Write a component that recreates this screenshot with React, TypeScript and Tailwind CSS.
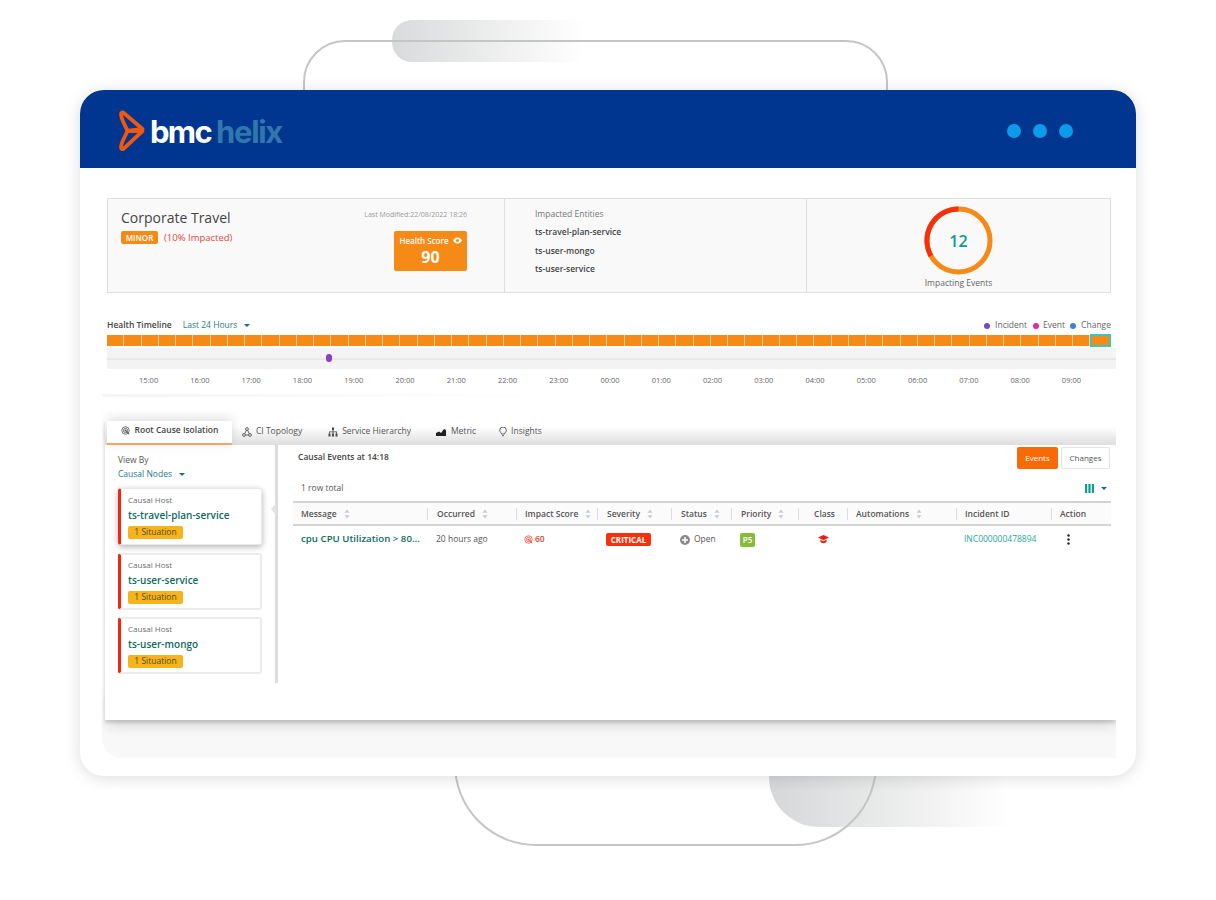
const hours = ["15:00","16:00","17:00","18:00","19:00","20:00","21:00","22:00","23:00","00:00","01:00","02:00","03:00","04:00","05:00","06:00","07:00","08:00","09:00"];
const segments = Array.from({ length: 57 }, (_, i) => i);

const columns = [
  { label: "Message", sort: true, w: "w-[134px]", pl: "pl-2" },
  { label: "Occurred", sort: true, w: "w-[89px]", pl: "pl-[9px]" },
  { label: "Impact Score", sort: true, w: "w-[81px]", pl: "pl-2" },
  { label: "Severity", sort: true, w: "w-[74px]", pl: "pl-[9px]" },
  { label: "Status", sort: true, w: "w-[60px]", pl: "pl-[9px]" },
  { label: "Priority", sort: true, w: "w-[67px]", pl: "pl-[9px]" },
  { label: "Class", sort: false, w: "w-[49px]", pl: "pl-[15px]" },
  { label: "Automations", sort: true, w: "w-[109px]", pl: "pl-2" },
  { label: "Incident ID", sort: false, w: "w-[95px]", pl: "pl-2" },
  { label: "Action", sort: false, w: "w-[60px]", pl: "pl-2" },
];

const hosts = [
  { name: "ts-travel-plan-service", active: true },
  { name: "ts-user-service", active: false },
  { name: "ts-user-mongo", active: false },
];

function Caret() {
  return <span className="ml-[7px] inline-block h-0 w-0 border-x-[3px] border-t-[3px] border-x-transparent border-t-[#0f6f7c] align-middle" />;
}

function SortIcon() {
  return (
    <svg width="6" height="10" viewBox="0 0 6 10" className="ml-[7px] shrink-0">
      <path d="M3 0.5 L5.5 3.8 H0.5 Z M3 9.5 L5.5 6.2 H0.5 Z" fill="#c9cdd0" />
    </svg>
  );
}

function TargetIcon({ color, size }: { color: string; size: number }) {
  return (
    <svg width={size} height={size} viewBox="0 0 12 12" fill="none" stroke={color} strokeWidth="1.1">
      <circle cx="6" cy="6" r="5" />
      <circle cx="6" cy="6" r="2.8" />
      <circle cx="6" cy="6" r="0.8" fill={color} />
      <path d="M6 6 L11 11" strokeWidth="1.4" />
    </svg>
  );
}

function Logo() {
  return (
    <div className="flex items-center">
      <svg width="28" height="42" viewBox="0 0 28 42" fill="none" stroke="#f2570f" strokeWidth="3.8" strokeLinejoin="round" strokeLinecap="round">
        <path d="M3 4 C3 2.5 4.5 2 5.5 2.8 L24.5 19 L9.5 21 C7 15 3 9 3 4 Z" />
        <path d="M9.5 21 L24.5 21 L5.5 38.8 C4.5 39.6 3 39 3 37.5 C3 32 7 27 9.5 21 Z" />
      </svg>
      <span className="ml-[4px] font-['Inter',sans-serif] text-[31px] leading-none font-bold tracking-[-1.7px] text-white">bmc</span>
      <span className="ml-[5px] font-['Inter',sans-serif] text-[31px] leading-none font-bold tracking-[-1.3px] text-[#3177ab]">helix</span>
    </div>
  );
}

function HostCard({ name, active }: { name: string; active: boolean }) {
  return (
    <div className={`relative h-[57px] w-[144px] rounded-[3px] border-l-[3px] border-l-[#f5230f] bg-white pl-[7px] ${active ? "border-y border-r border-y-[#e8e8e8] border-r-[#e8e8e8] pt-[4px] shadow-[0_2px_6px_rgba(0,0,0,0.3)]" : "border-y-2 border-r-2 border-y-[#ececec] border-r-[#ececec] pt-[3px]"}`}>
      <div className="text-[8px] leading-[14px] text-[#6c6c6c]">Causal Host</div>
      <div className="mt-[1px] text-[10px] leading-[15px] font-semibold text-[#0f6b62]">{name}</div>
      <div className="mt-[3px] flex h-[13px] w-[55px] items-center justify-center rounded-[2px] bg-[#f5b31c] text-[8.5px] text-[#5b4a1c]">1 Situation</div>
    </div>
  );
}

export default function App() {
  return (
    <div className="relative h-[900px] w-[1216px] overflow-hidden bg-white font-['Open_Sans',sans-serif] pt-[90px] pl-[80px]">
      {/* background shapes behind the card */}
      <div className="absolute top-[20px] left-[392px] h-[42px] w-[192px] rounded-l-[20px] bg-gradient-to-r from-[#d9dadb] to-white" />
      <div className="absolute top-[40px] left-[303px] h-[120px] w-[585px] rounded-[42px] border-2 border-[#c4c6c6]" />
      <div className="absolute top-[700px] left-[769px] h-[127px] w-[240px] rounded-bl-[50px] bg-gradient-to-r from-[#d6d7d8] to-white" />
      <div className="absolute top-[700px] left-[454px] h-[146px] w-[423px] rounded-b-[82px] border-2 border-[#c4c6c6]" />

      <div className="relative h-[686px] w-[1056px] overflow-hidden rounded-[24px] bg-white shadow-[0_2px_16px_rgba(0,0,0,0.14)]">
        <header className="flex h-[78px] items-center justify-between bg-[#00368f] pt-[4px] pr-[63px] pl-[38px]">
          <Logo />
          <div className="flex gap-[12px]">
            <span className="h-[14px] w-[14px] rounded-full bg-[#0b9be8]" />
            <span className="h-[14px] w-[14px] rounded-full bg-[#0b9be8]" />
            <span className="h-[14px] w-[14px] rounded-full bg-[#0b9be8]" />
          </div>
        </header>

        {/* summary */}
        <section className="mt-[30px] ml-[27px] flex h-[95px] w-[1004px] border border-[#dedede] bg-[#f9f9f9]">
          <div className="flex w-[397px] justify-between border-r border-[#dedede] pt-[9px] pr-[37px] pl-[13px]">
            <div>
              <div className="text-[14px] leading-[20px] text-[#444]">Corporate Travel</div>
              <div className="mt-[2px] flex items-center">
                <span className="flex h-[13px] w-[37px] items-center justify-center rounded-[2px] bg-[#f58a17] text-[8px] font-semibold text-white">MINOR</span>
                <span className="mt-[1px] ml-[6px] text-[9.5px] text-[#e2483f]">(10% Impacted)</span>
              </div>
            </div>
            <div className="flex flex-col items-end">
              <div className="text-[7px] leading-[14px] text-[#999]">Last Modified:22/08/2022 18:26</div>
              <div className="mt-[9px] flex h-[40px] w-[73px] flex-col items-center rounded-[2px] bg-[#f58a17] pt-[3px] text-white">
                <div className="flex items-center text-[8px] leading-[13px] font-semibold">
                  Health Score
                  <svg width="9" height="7" viewBox="0 0 12 8" className="ml-[4px]" fill="#fff">
                    <path d="M6 0 C9 0 11 2 12 4 C11 6 9 8 6 8 C3 8 1 6 0 4 C1 2 3 0 6 0 Z M6 2 A2 2 0 1 0 6 6 A2 2 0 1 0 6 2 Z" />
                  </svg>
                </div>
                <div className="text-[16px] leading-[20px] font-bold">90</div>
              </div>
            </div>
          </div>
          <div className="w-[302px] border-r border-[#dedede] pt-[9px] pl-[30px]">
            <div className="text-[8.5px] leading-[12px] text-[#777]">Impacted Entities</div>
            <div className="mt-[6px] text-[8.5px] leading-[12px] font-semibold text-[#444]">ts-travel-plan-service</div>
            <div className="mt-[7px] text-[8.5px] leading-[12px] font-semibold text-[#444]">ts-user-mongo</div>
            <div className="mt-[6px] text-[8.5px] leading-[12px] font-semibold text-[#444]">ts-user-service</div>
          </div>
          <div className="flex flex-1 flex-col items-center pt-[7px]">
            <div className="relative h-[69px] w-[69px]">
              <svg width="69" height="69" viewBox="0 0 69 69" fill="none" strokeWidth="5">
                <circle cx="34.5" cy="34.5" r="31.5" stroke="#f58a17" />
                <path d="M34.5 3 A31.5 31.5 0 0 0 7 50" stroke="#f5300f" />
              </svg>
              <div className="absolute inset-0 flex items-center justify-center text-[16px] font-semibold text-[#0e9a94]">12</div>
            </div>
            <div className="mt-[2px] text-[8.5px] leading-[12px] text-[#666]">Impacting Events</div>
          </div>
        </section>

        {/* timeline */}
        <section className="mt-[24px] ml-[27px]">
          <div className="flex h-[16px] w-[1004px] items-center justify-between">
            <div className="flex items-center">
              <span className="text-[8.5px] font-semibold text-[#444]">Health Timeline</span>
              <span className="ml-[11px] text-[8.5px] text-[#1d7a8c]">Last 24 Hours</span>
              <Caret />
            </div>
            <div className="mt-[1px] flex items-center text-[8.5px] text-[#666]">
              <span className="mr-[5px] h-[6px] w-[6px] rounded-full bg-[#7b45c4]" />Incident
              <span className="mr-[4px] ml-[6px] h-[6px] w-[6px] rounded-full bg-[#e02aa0]" />Event
              <span className="mr-[5px] ml-[5px] h-[6px] w-[6px] rounded-full bg-[#3b82e0]" />Change
            </div>
          </div>
          <div className="mt-[1px] flex h-[13px] w-[1004px] items-center">
            {segments.map((s) => (
              <span key={s} className="h-[11px] w-[17.25px] shrink-0 border-r border-r-[#fbcb93] bg-[#f58a17]" />
            ))}
            <span className="h-[13px] w-[21px] shrink-0 border-2 border-[#3fc5bd] bg-[#f58a17]" />
          </div>
          <div className="relative mt-[1px] flex h-[21px] w-[1009px] items-center bg-[#f3f3f3]">
            <div className="h-[2px] w-full bg-[#e8e8e8]" />
            <span className="absolute top-[6px] left-[219px] h-[8px] w-[6px] rounded-full bg-[#8a3fc4]" />
          </div>
          <div className="mt-[4px] flex w-[1009px] pl-[16px]">
            {hours.map((h) => (
              <span key={h} className="w-[51.27px] shrink-0 text-center text-[7.5px] leading-[14px] text-[#666]">{h}</span>
            ))}
          </div>
        </section>

        <div className="mt-[7px] ml-[22px] h-[3px] w-[465px] bg-gradient-to-r from-[#f5f5f5] to-white" />

        {/* tabs and content */}
        <section className="relative mt-[23px] ml-[22px] h-[338px] w-[1014px] rounded-bl-[20px] bg-gradient-to-b from-white from-[80%] to-[#f8f8f8] to-[84%]">
          <div className="relative ml-[3px] h-[300px] w-[1011px] bg-white shadow-[0_3px_3px_rgba(0,0,0,0.14),0_8px_12px_-2px_rgba(0,0,0,0.12)] [clip-path:inset(-20px_0_-30px_-3px)]">
            <nav className="flex h-[25px] items-center bg-gradient-to-b from-white from-[25%] to-[#dedede] pb-[2px] pl-[2px] text-[8.5px] text-[#555]">
              <div className="-mb-[2px] flex h-[24px] w-[125px] items-center justify-center self-end border-b-2 border-[#f8a468] bg-white pb-[3px] font-semibold text-[#444] shadow-[0_-3px_12px_rgba(0,0,0,0.12)]">
                <TargetIcon color="#555" size={9} />
                <span className="ml-[5px]">Root Cause Isolation</span>
              </div>
              <div className="ml-[10px] flex items-center">
                <svg width="10" height="10" viewBox="0 0 10 10" fill="none" stroke="#555" strokeWidth="0.9">
                  <circle cx="5" cy="2" r="1.4" /><circle cx="2" cy="8" r="1.4" /><circle cx="8" cy="8" r="1.4" />
                  <path d="M4.4 3.2 L2.7 6.8 M5.6 3.2 L7.3 6.8 M3.4 8 H6.6" />
                </svg>
                <span className="ml-[4px]">CI Topology</span>
              </div>
              <div className="ml-[26px] flex items-center">
                <svg width="10" height="10" viewBox="0 0 10 10" fill="#444">
                  <rect x="4" y="0.5" width="2" height="2.5" /><rect x="0.5" y="6.5" width="2" height="3" /><rect x="4" y="6.5" width="2" height="3" /><rect x="7.5" y="6.5" width="2" height="3" />
                  <path d="M4.6 3 H5.4 V4.5 H9 V6.5 H8.2 V5.2 H5.4 V6.5 H4.6 V5.2 H1.8 V6.5 H1 V4.5 H4.6 Z" />
                </svg>
                <span className="ml-[4px]">Service Hierarchy</span>
              </div>
              <div className="ml-[25px] flex items-center">
                <svg width="10" height="8" viewBox="0 0 10 8" fill="#222">
                  <path d="M0 8 V5 L3 3.5 L5 5 L8 1 L10 2 V8 Z" />
                </svg>
                <span className="ml-[5px]">Metric</span>
              </div>
              <div className="ml-[23px] flex items-center">
                <svg width="8" height="10" viewBox="0 0 8 10" fill="none" stroke="#555" strokeWidth="0.9">
                  <path d="M2.6 7 C2.4 5.8 0.7 5 0.7 3.3 A3.3 3.3 0 0 1 7.3 3.3 C7.3 5 5.6 5.8 5.4 7 Z M3 8.7 H5" />
                </svg>
                <span className="ml-[4px]">Insights</span>
              </div>
            </nav>

            <div className="flex">
              {/* causal nodes */}
              <aside className="relative h-[238px] w-[173px] border-r-[3px] border-[#dcdcdc] pt-[8px] pl-[13px]">
                <div className="text-[8.5px] leading-[14px] text-[#555]">View By</div>
                <div className="text-[8.5px] leading-[14px] text-[#1d7a8c]">Causal Nodes<Caret /></div>
                <div className="mt-[7px] flex flex-col gap-[7.5px]">
                  {hosts.map((h) => (
                    <HostCard key={h.name} name={h.name} active={h.active} />
                  ))}
                </div>
                <span className="absolute top-[58px] right-[-1px] h-0 w-0 border-y-[6px] border-r-[5px] border-y-transparent border-r-[#e4e4e4]" />
              </aside>

              {/* events table */}
              <div className="ml-[15px] w-[818px]">
                <div className="flex h-[29px] items-start justify-between pt-[2px]">
                  <span className="mt-[3px] ml-[5px] text-[8.5px] leading-[14px] font-semibold text-[#444]">Causal Events at 14:18</span>
                  <div className="mr-[1px] flex gap-[3px]">
                    <button className="h-[22px] w-[41px] rounded-[2px] bg-[#f76a05] text-[8px] text-white">Events</button>
                    <button className="h-[22px] w-[49px] rounded-[2px] border border-[#e3e3e3] text-[8px] text-[#555]">Changes</button>
                  </div>
                </div>
                <div className="mt-[7px] flex h-[20px] items-start justify-between">
                  <span className="ml-[8px] text-[8.5px] leading-[14px] text-[#555]">1 row total</span>
                  <div className="mt-[3px] mr-[4px] flex items-center">
                    <svg width="9" height="9" viewBox="0 0 9 9" fill="#0f9d8f">
                      <rect x="0" y="0" width="2.2" height="9" /><rect x="3.4" y="0" width="2.2" height="9" /><rect x="6.8" y="0" width="2.2" height="9" />
                    </svg>
                    <Caret />
                  </div>
                </div>
                <div className="flex h-[25px] items-center border-y-2 border-[#d4d4d4] bg-[#fbfbfb] pt-[1px]">
                  {columns.map((c, i) => (
                    <div key={c.label} className={`flex h-[12px] items-center text-[8.5px] font-semibold text-[#555] ${c.w} ${c.pl} ${i > 0 ? "border-l border-[#dedede]" : ""}`}>
                      {c.label}
                      {c.sort && <SortIcon />}
                    </div>
                  ))}
                </div>
                <div className="flex h-[26px] items-center pt-[1px] text-[8.5px]">
                  <div className="w-[134px] pl-[8px] text-[9.7px] font-semibold whitespace-nowrap text-[#0f6b62]">cpu CPU Utilization &gt; 80...</div>
                  <div className="w-[89px] pl-[9px] text-[#555]">20 hours ago</div>
                  <div className="flex w-[81px] items-center pl-[8px] font-semibold text-[#e8402c]">
                    <TargetIcon color="#ef5a48" size={9} />
                    <span className="ml-[2px]">60</span>
                  </div>
                  <div className="w-[74px] pl-[9px]">
                    <span className="flex h-[13px] w-[45px] items-center justify-center rounded-[2px] bg-[#fa300a] text-[8px] font-bold text-white">CRITICAL</span>
                  </div>
                  <div className="flex w-[60px] items-center pl-[9px] text-[#555]">
                    <svg width="10" height="10" viewBox="0 0 10 10">
                      <circle cx="5" cy="5" r="5" fill="#8a8a8a" />
                      <path d="M5 2 V8 M2 5 H8" stroke="#fff" strokeWidth="1.5" />
                    </svg>
                    <span className="ml-[4px]">Open</span>
                  </div>
                  <div className="w-[67px] pl-[9px]">
                    <span className="flex h-[14px] w-[15px] items-center justify-center rounded-[2px] bg-[#85bd38] text-[8px] font-semibold text-white">P5</span>
                  </div>
                  <div className="w-[49px] pl-[20px]">
                    <svg width="11" height="9" viewBox="0 0 11 9" fill="#ee1c0c">
                      <path d="M5.5 0 L11 2.6 L5.5 5.2 L0 2.6 Z M2.4 4.8 L5.5 6.2 L8.6 4.8 V6.8 C7.5 8.6 3.5 8.6 2.4 6.8 Z" />
                    </svg>
                  </div>
                  <div className="w-[109px]" />
                  <div className="w-[95px] pl-[8px] text-[#25a8a0]">INC000000478894</div>
                  <div className="w-[60px] pl-[16px]">
                    <svg width="3" height="11" viewBox="0 0 3 11" fill="#222">
                      <circle cx="1.5" cy="1.5" r="1.2" /><circle cx="1.5" cy="5.5" r="1.2" /><circle cx="1.5" cy="9.5" r="1.2" />
                    </svg>
                  </div>
                </div>
              </div>
            </div>
          </div>
        </section>
      </div>
    </div>
  );
}
